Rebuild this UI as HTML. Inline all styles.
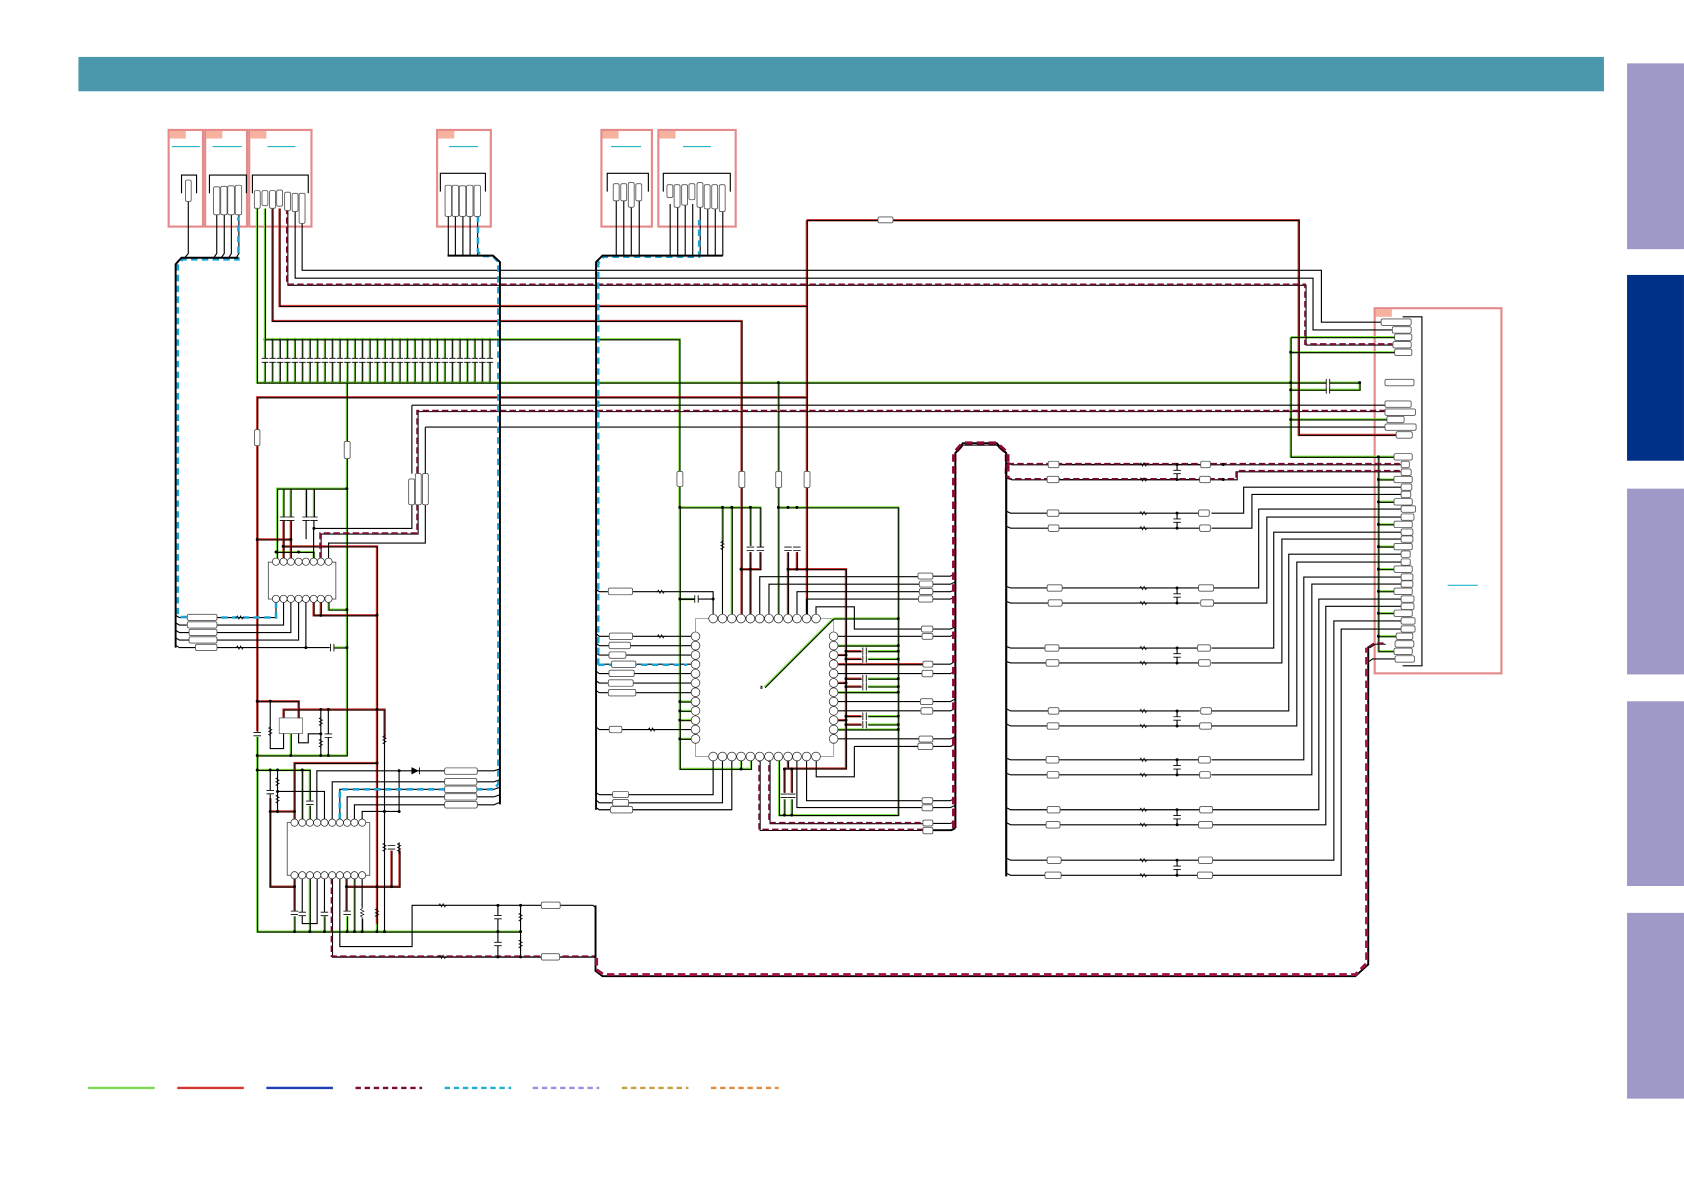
<!DOCTYPE html>
<html><head><meta charset="utf-8"><title>Schematic</title>
<style>
html,body{margin:0;padding:0;background:#fff}
svg{display:block}
.c rect{fill:#fff;stroke:#555;stroke-width:.8;rx:1.5px}
</style></head><body>
<svg xmlns="http://www.w3.org/2000/svg" width="1684" height="1191" viewBox="0 0 1568 1109" fill="none">
<defs>
<path id="G" d="M239.3 194V356.3H1266M1201.8 363H1266V356.3M246.7 194V316H632.7V473M633 473V716H699.3V704M323 356V704M258 520V455H323M239.5 686V867.5H484.7M239.5 703.5H323M270.8 683V703.5M239.5 717H288.5V745M288.5 750V766M281.4 717V766M633 472.5H708V509M672.7 472.5V505M681.4 472.5V576M698.7 472.5V508M724.8 356V576M724.8 472.5H836.4V759H725.4V704.4M776 576H836.4M776 576L712 640M776 601.2H836.4M808 606.4H836.4M808 613.6H836.4M808 632H836.4M808 639.3H836.4M808 666.9H836.4M808 674.7H836.4M776 644.6H836.4M776 679.3H836.4M633 653.3H644M633 662H644M633 670.6H644M633 688H644M1201.8 314V425.4H1298.6M1201.8 314H1298.6M1201.8 328H1298.6M1201.8 390.6H1291M1283.5 425V606.5H1298M1283.5 446.5H1298M1283.5 467.3H1298M1283.5 488.3H1298M1283.5 509H1298M1283.5 530H1298M1283.5 550.6H1298M1283.5 571H1298M1283.5 592.5H1300M305.9 560V567.7H323M257 514H292V520M311 603H323M264 455V481M270.6 455V481M285 455V481M292.3 455V481M288.5 815V867.5M274.2 853V867.5M302.1 853V867.5M323.2 853V867.5M330 815V867.5M337.2 855V867.5M351 855V867.5M730.4 744V759M737.2 744V759M690 704V716M633 557.8H646"/>
<path id="R" d="M253.7 194V298.9H690.5V576M260.3 194V285H751.3V576M751.3 205V285M751 205H1209.3V405H1300M239.5 681V370H751.3M239.5 502.3H270.8V520M264 485V520M270.8 485V502M263.7 508.8H351V860M292 560V573H351M298.7 560V573M239.5 653H278V668.5M264 668V660.7H358V688M274.2 763V710.5H351M251.6 743V825.6H274.2M251.6 755.6H274.2M274.2 818V848M322.6 825.6H372V792M322.6 818V848M364.5 792V825.6M708 514V530H690M698.7 514V576M733.7 514V576M742 514V530M733.7 530H787.7V715.6H730.3M733.7 704.4V716M730.4 716V738M737.2 716V738M776 618.5H859M776 609.9H787.7M787.7 606.4H802M787.7 613.6H802M787.7 632H802M787.7 639.3H802M787.7 666.9H802M787.7 674.7H802M776 635.9H787.7M776 670.6H787.7"/>
<path id="D" d="M267.7 194V265.4H1215.8V321H1297M389 441V383H1290M389 470V497H298.7V520M707.5 704V773H868M716.7 704V766.7H868M937 424V431L942 432.5H1304M937 436V445L942 446.5H1151.7V439H1304M1275 603L1280 599.6H1290M309.3 818V891H555"/>
<path id="K" d="M175.3 188V236L172 240M201.8 200V236L199 240M208.8 200V236L206 240M215.4 200V236L213 240M222.4 200V236L220 240M169 180V163H183V180M195 180V163H229.4V180M235 180V163H287V180M410 178.4V161.4H452V178.4M565.4 178.4V161.4H603.7V178.4M617.6 178.4V161.4H680V178.4M274.8 194V259H1222.6V307.2H1296M281.3 208V251.7H1230.4V300H1286M417.4 201V238M424 201V238M431 201V238M437.7 201V238M444.7 201V238M573.8 187V238M580.8 187V238M587.8 190V238M595.2 187V238M624 190V238M631 190V238M638 190V238M645 190V238M652 190V238M659 190V238M666 190V238M673 190V238M383.5 377.3H1289.6M383.5 441V377.3M383.5 470V492H292V520M396 397.7H1290M396 441V397.7M396 470V505.7H305.9V520M285 485V502M292.3 485V492M264 560V582H202M270.8 560V589H202M278 560V596H202M284.8 560V603H307M284.8 603H202M257 560V575H202M163.5 573L167 575H174M163.5 580L167 582H174M163.5 587L167 589H176M163.5 594L167 596H176M163.5 601L167 603H182M251.6 653V697H264V683M278 683V691.7H287V683.3H298.7M298.7 660.7V703.5M305.7 660.7V703.5M358 688V867.5M295 763V717.7H414M444 717.7H460L465.5 716M309.3 763V728H414M444 728H460L465.5 726M316.4 763V735H414M444 735H460L465.5 733M323.2 763V742H414M444 742H460L465.5 740M330 763V749.4H414M444 749.4H460L465.5 747M371.6 717.7V755.6H337.2V763M371.6 785V795M258.4 717V755.6M258.4 737H302.1V763M251.6 717V743M316.4 818V881.4H383.7V843H504M521 843H552L554.5 845M281.4 818V860H295.3V818M337.2 818V845M302.1 818V850M463.6 843V891M484.7 843V891M309.3 891H504M521 891H552M589 551H664V573M633 557.8H664M589 592.5H644M587 601.2H644M583 610H644M592 618.5H644M590 627.2H644M590 636H644M592 645H644M579 679.3H644M555 549L558 551H566M555 590L558 592.5H567M555 599L558 601.2H567M555 608L558 610H567M555 616L558 618.5H569M555 625L558 627.2H567M555 634L558 636H566M555 643L558 645H566M555 677L558 679.3H567M664 708V740H585M672.7 708V747.5H585M681.4 708V754H589M555 738L558 740H570M555 745L558 747.5H570M555 752L558 754H568M707.4 573V537H855M716 573V544H856M742.1 573V551H856M751 573V557.8H855M759.8 573V565H795.5V585.7H858M780 592.5H858M780 627.2H859M780 653.3H857M780 661.9H857M780 688H856M795.5 695H855M795.5 695V723.3H760V708M751 708V745.6H858M742 708V752H858M868 536.5H885L889 534M868 544H885L889 542M868 551H885L889 549M868 557.8H885L889 556M868 585.7H885L889 584M868 592.5H885L889 590M868 618.5H885L889 616M868 627.2H885L889 625M868 653.3H885L889 651M868 661.9H885L889 660M868 688H885L889 686M868 695H885L889 693M868 745.6H885L889 743M868 752H885L889 750M868 766.7H885L889 765M868 773H885L889 771M672.7 505V573M1128 477.8H1158V453.6H1304.6M1128 491.8H1165.7V460.4H1304.6M1128 547.5H1172V474H1304.6M1128 561.5H1179.6V481.5H1304.6M1128 603.4H1186V495.5H1304.6M1128 617.3H1193.6V502H1304.6M1128 662H1200V516H1304.6M1128 676H1207.5V523.4H1304.6M1128 707.5H1214V537.3H1304.6M1128 721.5H1221.5V543.8H1304.6M1128 754H1228V557.8H1304.6M1128 768H1234.5V564.6H1304.6M1128 801H1242V578.2H1304.6M1128 815H1248.8V585.7H1304.6M1274.5 616L1278 613.6H1300M1306 295H1324V620H1306M937 476L941 477.8H976M937 490L941 491.8H976M937 546L941 547.5H976M937 560L941 561.5H976M937 602L941 603.4H976M937 616L941 617.3H976M937 660L941 662H976M937 674L941 676H976M937 706L941 707.5H976M937 720L941 721.5H976M937 752L941 754H976M937 766L941 768H976M937 799L941 801H976M937 813L941 815H976M986 432.5H1117M986 446.5H1117M986 477.8H1117M986 491.8H1117M986 547.5H1117M986 561.5H1117M986 603.4H1117M986 617.3H1117M986 662H1117M986 676H1117M986 707.5H1117M986 721.5H1117M986 754H1117M986 768H1117M986 801H1117M986 815H1117M1096 432.5V446.5M1096 477.8V491.8M1096 547.5V561.5M1096 603.4V617.3M1096 662V676M1096 707.5V721.5M1096 754V768M1096 801V815"/>
<g id="rr"><path d="M-4 0h1l1-1.6 1.5 3.2 1.5-3.2 1.5 3.2 1-1.6h1" stroke="#000" stroke-width=".6"/></g>
<g id="vr"><path d="M0-5v1l-1.6 1 3.2 1.5-3.2 1.5 3.2 1.5-3.2 1.5 1.6 1v1" stroke="#000" stroke-width=".6"/></g>
<g id="cv"><rect x="-4" y="-1.6" width="8" height="3.2" fill="#fff"/><path d="M-3.5-1.6h7M-3.5 1.6h7" stroke="#000" stroke-width=".8"/></g>
<g id="ch"><rect x="-1.6" y="-4" width="3.2" height="8" fill="#fff"/><path d="M-1.6-3.5v7M1.6-3.5v7" stroke="#000" stroke-width=".8"/></g>
<g id="col">
<path d="M-.5 316V333.500M-.5 337.500V356" stroke="#7fdc4a" stroke-width="1.300"/>
<path d="M.3 316V333.500M.3 337.500V356" stroke="#000" stroke-width="1"/>
<path d="M-3 333.600h6M-3 337.400h6" stroke="#000" stroke-width=".8"/>
<path d="M0 316h0M0 356h0" stroke="#000" stroke-width="2.800" stroke-linecap="round"/>
</g>
</defs>
<rect width="1568" height="1109" fill="#fff"/>
<rect x="73" y="53" width="1420.500" height="32" fill="#4b97ae"/>
<g fill="#9e9ac8"><rect x="1515" y="59" width="53" height="173"/><rect x="1515" y="455" width="53" height="173"/><rect x="1515" y="653" width="53" height="172"/><rect x="1515" y="850" width="53" height="173"/></g>
<rect x="1515" y="256" width="53" height="173" fill="#003087"/>

<g fill="#f7b29f"><rect x="158" y="122" width="15" height="7"/><rect x="192" y="122" width="15" height="7"/><rect x="233" y="122" width="15" height="7"/><rect x="408" y="122" width="15" height="7"/><rect x="561" y="122" width="15" height="7"/><rect x="614" y="122" width="15" height="7"/><rect x="1281" y="288" width="15" height="7"/></g>
<g stroke="#e58a8a" stroke-width="2"><rect x="157" y="121" width="32" height="90"/><rect x="191" y="121" width="39" height="90"/><rect x="232" y="121" width="58" height="90"/><rect x="407" y="121" width="50" height="90"/><rect x="560" y="121" width="47" height="90"/><rect x="613" y="121" width="72" height="90"/><rect x="1280" y="287" width="118" height="340"/></g>
<path d="M160 136.500H186M198 136.500H225M249 136.500H275M418 136.500H445M569 136.500H597M636 136.500H662M1348 545H1376" stroke="#1fb6c8" stroke-width="1"/>

<rect x="249.800" y="523.400" width="62.900" height="34.400" fill="#fff" stroke="#333" stroke-width=".7"/>
<rect x="267.400" y="766" width="76.900" height="49" fill="#fff" stroke="#333" stroke-width=".7"/>
<rect x="647.600" y="576" width="128.600" height="128.400" stroke="#999" stroke-width=".8"/>
<rect x="260" y="668.500" width="21.700" height="14.500" fill="#fff" stroke="#777" stroke-width=".8"/>

<use href="#col" x="246.700"/><use href="#col" x="253.700"/><use href="#col" x="260.700"/><use href="#col" x="267.600"/><use href="#col" x="274.600"/><use href="#col" x="281.600"/><use href="#col" x="288.600"/><use href="#col" x="295.600"/><use href="#col" x="302.500"/><use href="#col" x="309.500"/><use href="#col" x="316.500"/><use href="#col" x="323.500"/><use href="#col" x="330.500"/><use href="#col" x="337.400"/><use href="#col" x="344.400"/><use href="#col" x="351.400"/><use href="#col" x="358.400"/><use href="#col" x="365.400"/><use href="#col" x="372.300"/><use href="#col" x="379.300"/><use href="#col" x="386.300"/><use href="#col" x="393.300"/><use href="#col" x="400.300"/><use href="#col" x="407.200"/><use href="#col" x="414.200"/><use href="#col" x="421.200"/><use href="#col" x="428.200"/><use href="#col" x="435.200"/><use href="#col" x="442.100"/><use href="#col" x="449.100"/><use href="#col" x="456.100"/>

<use href="#G" stroke="#7be03c" stroke-width="2.200"/>
<use href="#R" stroke="#c8382e" stroke-width="2.200"/>
<use href="#G" stroke="#000" stroke-width="1" transform="translate(.4 .4)"/>
<use href="#R" stroke="#000" stroke-width="1" transform="translate(.4 .4)"/>
<use href="#K" stroke="#000" stroke-width="1.050"/>
<use href="#D" stroke="#000" stroke-width="1" transform="translate(.3 .3)"/>
<use href="#D" stroke="#7a0a32" stroke-width="1.700" stroke-dasharray="6 3" transform="translate(-.6 -.6)"/>

<g stroke="#1ba3d6" stroke-width="2.400" stroke-dasharray="6 4">
<path d="M165.500 572V247L170 241.500H222V202M257 560V575H202M174 574.500H166"/>
<path d="M445 201V234L448 238.500H459L464 244V730L460 735H444M316.400 763V735H414"/>
<path d="M557 619V245L562 239H651V205M557 619H640"/>
</g>

<g stroke="#000" stroke-width="1.800">
<path d="M222 240H169L163.500 246V603M416.700 238H459L465.500 244V749M673 238H561L555 244V754"/>
<path d="M889.500 771V422L896.500 412.700H928L937 422V816M889.500 771L886 773H868"/>
<path d="M554.500 843V904L561 909H1262L1274 898V602"/>
</g>
<g stroke="#8a0a30" stroke-width="4" stroke-dasharray="7 4">
<path d="M888.500 771V422L896.500 413H928L938 422V432"/>
<path d="M938 432V445"/>
</g>
<path d="M555.500 892V903L562 907.500H1262L1272.500 897V603" stroke="#a01040" stroke-width="2.800" stroke-dasharray="7 4"/>
<path d="M889.800 771V422L896.500 414.500H928L936.500 422V816" stroke="#000" stroke-width="1"/>

<g>
<use href="#rr" x="223" y="575"/><use href="#rr" x="223" y="603"/><use href="#rr" x="411.600" y="843"/><use href="#rr" x="411.600" y="891"/>
<use href="#rr" x="615" y="551"/><use href="#rr" x="615" y="592.500"/><use href="#rr" x="606.600" y="679.300"/>
<use href="#rr" x="1064.300" y="432.500"/><use href="#rr" x="1064.300" y="446.500"/><use href="#rr" x="1064.300" y="477.800"/><use href="#rr" x="1064.300" y="491.800"/><use href="#rr" x="1064.300" y="547.500"/><use href="#rr" x="1064.300" y="561.500"/><use href="#rr" x="1064.300" y="603.400"/><use href="#rr" x="1064.300" y="617.300"/><use href="#rr" x="1064.300" y="662"/><use href="#rr" x="1064.300" y="676"/><use href="#rr" x="1064.300" y="707.500"/><use href="#rr" x="1064.300" y="721.500"/><use href="#rr" x="1064.300" y="754"/><use href="#rr" x="1064.300" y="768"/><use href="#rr" x="1064.300" y="801"/><use href="#rr" x="1064.300" y="815"/>
<use href="#vr" x="251.600" y="681"/><use href="#vr" x="298.700" y="672"/><use href="#vr" x="298.700" y="692"/><use href="#vr" x="358" y="689"/><use href="#vr" x="258.400" y="728"/><use href="#vr" x="258.400" y="744"/><use href="#vr" x="358" y="789"/><use href="#vr" x="371.600" y="789"/><use href="#vr" x="337.200" y="850"/><use href="#vr" x="351" y="850"/><use href="#vr" x="484.700" y="854"/><use href="#vr" x="484.700" y="879"/><use href="#vr" x="672.700" y="508"/>
</g>
<g>
<use href="#cv" x="264" y="483"/><use href="#cv" x="270.600" y="483"/><use href="#cv" x="285" y="483"/><use href="#cv" x="292.300" y="483"/><use href="#cv" x="239.500" y="683.600"/><use href="#cv" x="305.700" y="685"/><use href="#cv" x="251.600" y="737.600"/><use href="#cv" x="288.500" y="747.500"/><use href="#cv" x="364.500" y="789"/><use href="#cv" x="274.200" y="850"/><use href="#cv" x="281.400" y="851"/><use href="#cv" x="302.100" y="851"/><use href="#cv" x="323.200" y="850"/><use href="#cv" x="463.600" y="854"/><use href="#cv" x="463.600" y="879"/>
<use href="#cv" x="698.700" y="511"/><use href="#cv" x="708" y="511"/><use href="#cv" x="733.700" y="511"/><use href="#cv" x="742" y="511"/><use href="#cv" x="730.400" y="741"/><use href="#cv" x="737.200" y="741"/>
<use href="#cv" x="1096" y="439.500"/><use href="#cv" x="1096" y="484.800"/><use href="#cv" x="1096" y="554.500"/><use href="#cv" x="1096" y="610.300"/><use href="#cv" x="1096" y="669"/><use href="#cv" x="1096" y="714.500"/><use href="#cv" x="1096" y="761"/><use href="#cv" x="1096" y="808"/>
<use href="#ch" x="309.300" y="603"/><use href="#ch" x="648.500" y="557.800"/><use href="#ch" x="1236.500" y="356.300"/><use href="#ch" x="1236.500" y="363"/>
<use href="#ch" x="805" y="606.400"/><use href="#ch" x="805" y="613.600"/><use href="#ch" x="805" y="632"/><use href="#ch" x="805" y="639.300"/><use href="#ch" x="805" y="666.900"/><use href="#ch" x="805" y="674.700"/>
</g>
<path d="M383.500 715V720.500L389 717.700ZM390.500 714.500V721" fill="#000" stroke="#000" stroke-width=".8"/>
<path d="M708 638.500h2v3h-2z" fill="#444"/>

<path stroke="#000" stroke-width="2.800" stroke-linecap="round" d="M323 455h0M292.300 492h0M239.500 502.300h0M270.800 502.300h0M263.700 508.800h0M257 514h0M278 514h0M323 567.700h0M284.800 603h0M323 603h0M298.700 573h0M351 573h0M239.500 653h0M251.600 653h0M298.700 660.700h0M305.700 660.700h0M351 660.700h0M298.700 683.300h0M239.500 703.500h0M270.800 703.500h0M298.700 703.500h0M305.700 703.500h0M351 710.500h0M239.500 717h0M251.600 717h0M258.400 717h0M281.400 717h0M371.600 717.700h0M258.400 737h0M251.600 755.600h0M258.400 755.600h0M274.200 755.600h0M358 755.600h0M371.600 755.600h0M274.200 825.600h0M322.600 825.600h0M351 825.600h0M364.500 825.600h0M274.200 867.500h0M288.500 867.500h0M302.100 867.500h0M323.200 867.500h0M330 867.500h0M337.200 867.500h0M351 867.500h0M358 867.500h0M463.600 843h0M484.700 843h0M463.600 867.500h0M484.700 867.500h0M463.600 891h0M484.700 891h0
M633 472.500h0M672.700 472.500h0M681.400 472.500h0M698.700 472.500h0M724.800 472.500h0M733.700 472.500h0M742 472.500h0M690 530h0M698.700 530h0M733.700 530h0M742 530h0M751.300 530h0M724.800 356.300h0M633 557.800h0M664 557.800h0M836.400 576h0M836.400 601.200h0M836.400 606.400h0M836.400 613.600h0M836.400 632h0M836.400 639.300h0M836.400 644.600h0M836.400 666.900h0M836.400 674.700h0M836.400 679.300h0M787.700 609.900h0M787.700 606.400h0M787.700 613.600h0M787.700 632h0M787.700 635.900h0M787.700 639.300h0M787.700 666.900h0M787.700 670.600h0M787.700 674.700h0M633 653.300h0M633 662h0M633 670.600h0M633 688h0M690 716h0M730.400 716h0M737.200 716h0M730.400 759h0M737.200 759h0
M1201.800 328h0M1201.800 356.300h0M1201.800 363h0M1201.800 390.600h0M1266 356.300h0M1283.500 425.400h0M1283.500 446.500h0M1283.500 467.300h0M1283.500 488.300h0M1283.500 509h0M1283.500 530h0M1283.500 550.600h0M1283.500 571h0M1283.500 592.500h0M1139 432.500h0M1139 446.500h0
M1096 432.500h0M1096 446.500h0M1096 477.800h0M1096 491.800h0M1096 547.500h0M1096 561.500h0M1096 603.400h0M1096 617.300h0M1096 662h0M1096 676h0M1096 707.500h0M1096 721.500h0M1096 754h0M1096 768h0M1096 801h0M1096 815h0"/>

<defs>
<path id="P" d="M256.900 523h0M264 523h0M270.800 523h0M278 523h0M284.800 523h0M292 523h0M298.700 523h0M305.900 523h0M256.900 557.600h0M264 557.600h0M270.800 557.600h0M278 557.600h0M284.800 557.600h0M292 557.600h0M298.700 557.600h0M305.900 557.600h0
M274.200 766h0M281.400 766h0M288.500 766h0M295.300 766h0M302.100 766h0M309.300 766h0M316.400 766h0M323.200 766h0M330 766h0M337.200 766h0M274.200 815h0M281.400 815h0M288.500 815h0M295.300 815h0M302.100 815h0M309.300 815h0M316.400 815h0M323.200 815h0M330 815h0M337.200 815h0"/>
<path id="Q" d="M664 576h0M672.700 576h0M681.400 576h0M690 576h0M698.700 576h0M707.400 576h0M716 576h0M724.800 576h0M733.700 576h0M742.100 576h0M751 576h0M759.800 576h0M664 704.400h0M672.700 704.400h0M681.400 704.400h0M690 704.400h0M698.700 704.400h0M707.400 704.400h0M716 704.400h0M724.800 704.400h0M733.700 704.400h0M742.100 704.400h0M751 704.400h0M759.800 704.400h0
M647.600 592.500h0M647.600 601.200h0M647.600 609.900h0M647.600 618.500h0M647.600 627.200h0M647.600 635.900h0M647.600 644.600h0M647.600 653.300h0M647.600 661.900h0M647.600 670.600h0M647.600 679.300h0M647.600 688h0M776.200 592.500h0M776.200 601.200h0M776.200 609.900h0M776.200 618.500h0M776.200 627.200h0M776.200 635.900h0M776.200 644.600h0M776.200 653.300h0M776.200 661.900h0M776.200 670.600h0M776.200 679.300h0M776.200 688h0"/>
</defs>
<use href="#P" stroke="#222" stroke-width="7.400" stroke-linecap="round"/>
<use href="#P" stroke="#fff" stroke-width="6.100" stroke-linecap="round"/>
<use href="#Q" stroke="#222" stroke-width="8.800" stroke-linecap="round"/>
<use href="#Q" stroke="#fff" stroke-width="7.500" stroke-linecap="round"/>

<g class="c">
<rect x="172.700" y="167.600" width="5.300" height="20"/>
<rect x="198.800" y="174" width="5.900" height="26"/><rect x="205.500" y="173.500" width="5.900" height="26.500"/><rect x="212" y="173" width="6.200" height="27"/><rect x="219" y="172.500" width="6" height="27.500"/>
<rect x="236.800" y="177.500" width="5.500" height="16.500"/><rect x="243.900" y="177.500" width="5.500" height="14"/><rect x="251" y="177.500" width="5.500" height="16.500"/><rect x="257.600" y="177" width="5.500" height="15"/><rect x="265" y="179" width="5.500" height="17"/><rect x="272" y="180" width="5.500" height="17"/><rect x="278.500" y="180" width="5.500" height="28"/>
<rect x="414.400" y="172.500" width="6" height="29"/><rect x="421" y="172.500" width="6" height="29"/><rect x="427.700" y="173" width="6" height="28.500"/><rect x="434.400" y="172.500" width="6" height="29"/><rect x="441.400" y="172.500" width="6" height="29"/>
<rect x="571" y="171" width="5.500" height="16"/><rect x="578" y="171" width="5.500" height="16"/><rect x="585" y="170" width="5.500" height="23"/><rect x="592" y="171" width="5.500" height="16"/>
<rect x="621" y="172" width="5.500" height="12"/><rect x="627.700" y="172" width="5.500" height="21"/><rect x="634.700" y="172" width="5.500" height="19"/><rect x="641.500" y="171" width="5.500" height="15"/><rect x="649" y="170" width="5.500" height="23"/><rect x="655.700" y="172" width="5.500" height="22.500"/><rect x="662.700" y="172" width="5.500" height="22.500"/><rect x="669.700" y="172" width="5.500" height="25"/>
<rect x="237" y="400" width="5" height="15"/><rect x="320.500" y="411" width="5.500" height="16"/>
<rect x="630.300" y="439" width="5.500" height="14"/><rect x="688" y="439" width="5.500" height="15"/><rect x="722.300" y="439" width="5.500" height="15"/><rect x="748.700" y="439" width="5.500" height="15"/>
<rect x="380.500" y="446" width="5.500" height="24"/><rect x="386.700" y="441" width="5.500" height="29"/><rect x="393.300" y="441" width="5.500" height="29"/>
<rect x="817.500" y="202" width="14" height="5.500"/>
<rect x="174.400" y="572" width="27.600" height="5.800"/><rect x="174.400" y="579" width="27.600" height="5.800"/><rect x="176" y="586" width="26" height="5.800"/><rect x="176" y="593" width="26" height="5.800"/><rect x="182" y="600" width="20" height="5.800"/>
<rect x="414" y="715" width="30.400" height="6"/><rect x="414" y="725" width="30" height="6"/><rect x="414" y="732" width="30" height="6"/><rect x="414" y="739" width="30" height="6"/><rect x="414" y="746.400" width="30.400" height="6"/>
<rect x="504" y="840" width="17.600" height="6"/><rect x="504" y="888" width="17" height="6"/>
<rect x="566.400" y="547.600" width="22.600" height="6.200"/><rect x="567.300" y="589.500" width="21.700" height="6"/><rect x="567" y="598" width="20" height="6"/><rect x="567" y="607" width="15.800" height="6"/><rect x="569.400" y="615.500" width="22.600" height="6"/><rect x="567" y="624" width="23.500" height="6"/><rect x="566.400" y="633" width="23.200" height="6"/><rect x="566.400" y="642" width="25.600" height="6"/><rect x="567.300" y="676.300" width="11.700" height="6"/>
<rect x="570.400" y="737" width="14.900" height="5.700"/><rect x="570.400" y="744.500" width="14.900" height="6"/><rect x="568.500" y="751" width="20.500" height="6"/>
<rect x="854.700" y="533.600" width="13.900" height="5.600"/><rect x="856" y="541" width="12.600" height="5.600"/><rect x="856" y="548" width="12.600" height="5.600"/><rect x="855.300" y="554.800" width="13.300" height="5.800"/>
<rect x="858" y="583" width="10.600" height="5.500"/><rect x="858.500" y="589.800" width="10.100" height="5.500"/><rect x="859.300" y="615.700" width="9.300" height="5.500"/><rect x="858.500" y="624.200" width="10.100" height="6"/><rect x="857" y="650.600" width="11.600" height="5.500"/><rect x="857.500" y="659" width="11" height="6"/><rect x="855.600" y="685.400" width="13" height="5.600"/><rect x="854.700" y="692" width="13.900" height="6"/>
<rect x="858.500" y="742.800" width="10" height="5.600"/><rect x="858.500" y="749.400" width="10" height="5.600"/><rect x="859.300" y="763.600" width="9.300" height="5.500"/><rect x="859.300" y="770.400" width="9.300" height="6"/>
<rect x="976" y="429.500" width="10" height="6"/><rect x="975" y="443.500" width="11" height="6"/><rect x="975" y="474.800" width="11" height="6"/><rect x="976" y="488.800" width="10" height="6"/><rect x="975" y="544.500" width="14" height="6"/><rect x="976" y="558.500" width="13" height="6"/><rect x="973" y="600.400" width="13" height="6"/><rect x="974" y="614.300" width="12" height="6"/><rect x="976" y="659" width="10" height="6"/><rect x="975" y="673" width="11" height="6"/><rect x="974" y="704.500" width="12" height="6"/><rect x="975" y="718.500" width="11" height="6"/><rect x="975" y="751" width="12" height="6"/><rect x="974" y="765" width="13" height="6"/><rect x="975" y="798" width="13" height="6"/><rect x="973" y="812" width="15" height="6"/>
<rect x="1118" y="429.500" width="9" height="6"/><rect x="1117" y="443.500" width="10" height="6"/><rect x="1116" y="474.800" width="10" height="6"/><rect x="1117" y="488.800" width="10" height="6"/><rect x="1116" y="544.500" width="14" height="6"/><rect x="1118" y="558.500" width="12" height="6"/><rect x="1115" y="600.400" width="12" height="6"/><rect x="1116" y="614.300" width="11" height="6"/><rect x="1118" y="659" width="10" height="6"/><rect x="1117" y="673" width="11" height="6"/><rect x="1116" y="704.500" width="11" height="6"/><rect x="1117" y="718.500" width="10" height="6"/><rect x="1117" y="751" width="12" height="6"/><rect x="1116" y="765" width="13" height="6"/><rect x="1116" y="798" width="13" height="6"/><rect x="1115" y="812" width="14" height="6"/>
<rect x="1286" y="297" width="28" height="6"/><rect x="1296.400" y="304.200" width="17.600" height="6"/><rect x="1298.600" y="311" width="16" height="6"/><rect x="1297" y="318" width="17" height="6"/><rect x="1298.600" y="325" width="16" height="6"/><rect x="1289.600" y="353.200" width="27" height="6"/><rect x="1289.600" y="373.300" width="24.400" height="6"/><rect x="1289.600" y="380.800" width="28.400" height="6"/><rect x="1291.400" y="387.600" width="16" height="6"/><rect x="1289.600" y="394.700" width="29" height="6"/><rect x="1300" y="402" width="15" height="6"/>
<rect x="1298" y="422.400" width="17" height="6"/><rect x="1304.600" y="429.500" width="7.700" height="6"/><rect x="1304.600" y="436.700" width="9.400" height="6"/><rect x="1298" y="443.500" width="17" height="6"/><rect x="1304.600" y="450.600" width="10" height="6"/><rect x="1304.600" y="457.400" width="9" height="6"/><rect x="1298" y="464.300" width="17" height="6"/><rect x="1304.600" y="471" width="13.400" height="6"/><rect x="1304.600" y="478.500" width="12" height="6"/><rect x="1298" y="485.300" width="17" height="6"/><rect x="1304.600" y="492.500" width="11" height="6"/><rect x="1304.600" y="499" width="11" height="6"/><rect x="1298" y="506" width="17" height="6"/><rect x="1304.600" y="513" width="8.500" height="6"/><rect x="1304.600" y="520.400" width="8.500" height="6"/><rect x="1298" y="527" width="17" height="6"/><rect x="1304.600" y="534.300" width="11" height="6"/><rect x="1304.600" y="540.800" width="11" height="6"/><rect x="1298" y="547.600" width="17" height="6"/><rect x="1304.600" y="554.800" width="12" height="6"/><rect x="1304.600" y="561.600" width="12" height="6"/><rect x="1298" y="568" width="17" height="6"/><rect x="1304.600" y="575.200" width="13" height="6"/><rect x="1304.600" y="582.700" width="13" height="6"/><rect x="1300" y="589.500" width="15.500" height="6"/><rect x="1299" y="596.600" width="17.500" height="6"/><rect x="1298" y="603.500" width="17" height="6"/><rect x="1299" y="610.600" width="18" height="6"/>
</g>

<g stroke-width="2.200">
<path d="M82 1013H144" stroke="#7ed957"/><path d="M165 1013H227" stroke="#d3372f"/><path d="M248 1013H310" stroke="#1f3fb5"/>
<path d="M331 1013H393" stroke="#7a0a3a" stroke-dasharray="5 3.500"/><path d="M414 1013H476" stroke="#1fb0d0" stroke-dasharray="5 3.500"/><path d="M496 1013H558" stroke="#9b8fe0" stroke-dasharray="5 3.500"/><path d="M579 1013H641" stroke="#c8a03c" stroke-dasharray="5 3.500"/><path d="M662 1013H725" stroke="#e08c3c" stroke-dasharray="5 3.500"/>
</g>
</svg>
</body></html>
